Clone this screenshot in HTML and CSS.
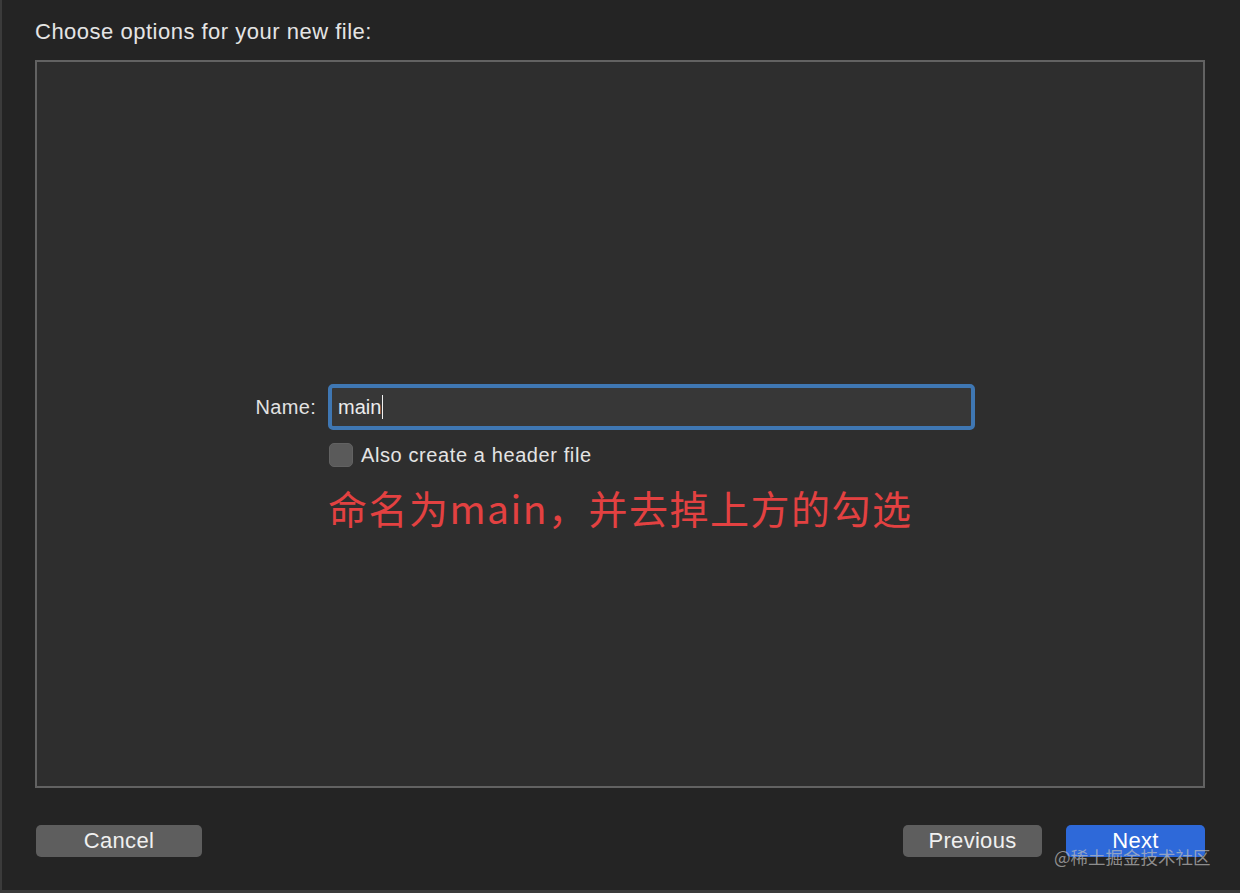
FILE: index.html
```html
<!DOCTYPE html>
<html lang="en">
<head>
<meta charset="utf-8">
<title>Choose options</title>
<link rel="stylesheet" href="styles.css">
</head>
<body>
<div class="window">
  <div class="title">Choose options for your new file:</div>
  <div class="panel">
    <div class="form">
      <label class="label" for="name">Name:</label>
      <div class="input"><span class="value">main</span><span class="caret"></span></div>
      <div class="check-row">
        <span class="checkbox"></span>
        <span class="check-label">Also create a header file</span>
      </div>
      <div class="note">命名为main，并去掉上方的勾选</div>
    </div>
  </div>
  <div class="footer">
    <button class="btn">Cancel</button>
    <div class="right-btns">
      <button class="btn">Previous</button>
      <button class="btn primary">Next</button>
    </div>
    <div class="watermark">@稀土掘金技术社区</div>
  </div>
</div>
</body>
</html>
```

FILE: styles.css
```css
html, body {
  margin: 0;
  padding: 0;
  background: #232323;
}
body {
  font-family: "Liberation Sans", Arial, sans-serif;
  color: #e6e6e6;
}
.window {
  width: 1240px;
  height: 893px;
  box-sizing: border-box;
  border-left: 2px solid #3b3b3b;
  border-bottom: 3px solid #3b3b3b;
  padding: 0 35px 0 33px;
  display: flex;
  flex-direction: column;
  background: #242424;
}
.title {
  margin-top: 18px;
  font-size: 22px;
  letter-spacing: 0.5px;
  line-height: 28px;
  color: #e4e4e4;
}
.panel {
  margin-top: 14px;
  height: 728px;
  box-sizing: border-box;
  border: 2px solid #626262;
  background: #2e2e2e;
  padding-top: 322px;
}
.form {
  display: grid;
  grid-template-columns: 279px 647px;
  column-gap: 12px;
  align-items: center;
}
.label {
  text-align: right;
  font-size: 20px;
  letter-spacing: 0.3px;
  color: #e2e2e2;
}
.input {
  height: 46px;
  box-sizing: border-box;
  border: 4px solid #3f77b3;
  border-radius: 5px;
  background: #373737;
  display: flex;
  align-items: center;
  padding-left: 6px;
  font-size: 20px;
  color: #ececec;
}
.caret {
  display: inline-block;
  width: 1px;
  height: 24px;
  background: #f0f0f0;
  margin-left: 1px;
}
.check-row {
  grid-column: 2;
  display: flex;
  align-items: center;
  gap: 8px;
  margin-top: 13px;
  margin-left: 1px;
}
.checkbox {
  width: 24px;
  height: 24px;
  box-sizing: border-box;
  border-radius: 5px;
  background: #5a5a5a;
  border: 1px solid #626262;
}
.check-label {
  font-size: 20px;
  letter-spacing: 0.6px;
  color: #e4e4e4;
}
.note {
  grid-column: 2;
  margin-top: 17px;
  font-family: "Noto Sans CJK SC", "Noto Sans", sans-serif;
  font-size: 39px;
  letter-spacing: 1.5px;
  line-height: 46px;
  color: #e34141;
  white-space: nowrap;
}
.footer {
  position: relative;
  margin-top: 37px;
  display: flex;
  justify-content: space-between;
  align-items: center;
  padding-left: 1px;
}
.right-btns {
  display: flex;
  gap: 24px;
}
.btn {
  height: 32px;
  border: none;
  border-radius: 5px;
  background: #5e5e5e;
  color: #f0f0f0;
  font-family: "Liberation Sans", Arial, sans-serif;
  font-size: 22px;
  letter-spacing: 0.3px;
  padding: 0;
  width: 139px;
}
.footer > .btn {
  width: 166px;
}
.btn.primary {
  background: #2e69d9;
  color: #ffffff;
}
.watermark {
  position: absolute;
  left: 1019px;
  top: 22px;
  white-space: nowrap;
  font-family: "Noto Sans CJK SC", sans-serif;
  font-size: 17.5px;
  line-height: 20px;
  color: rgba(190, 190, 190, 0.7);
}
```
